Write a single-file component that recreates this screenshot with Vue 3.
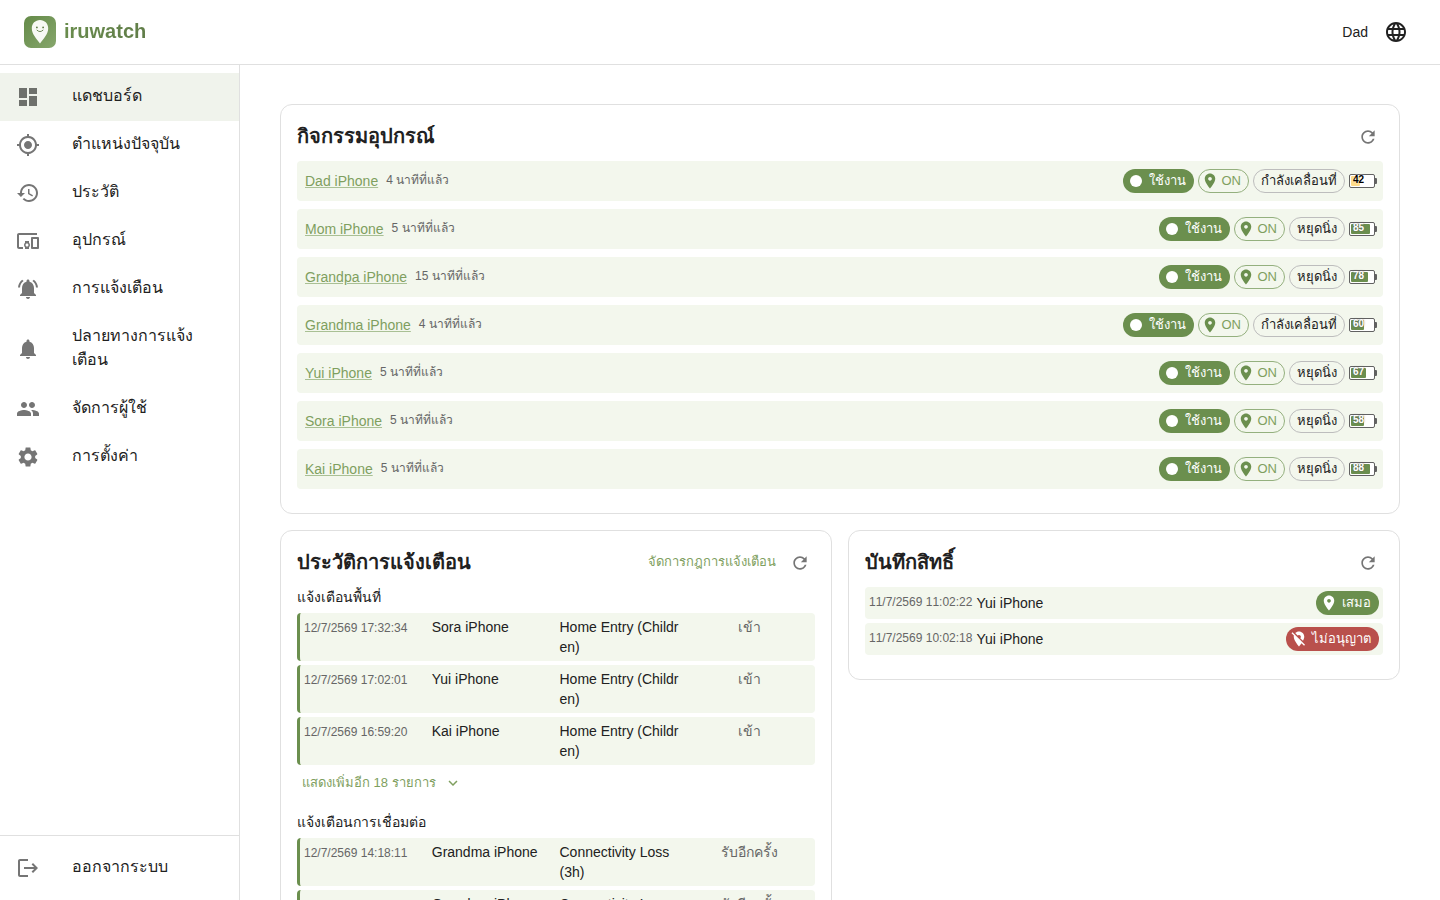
<template>
  <div class="app">
    <header class="topbar">
      <a href="#" class="brand">
        <svg class="brand__logo" viewBox="0 0 32 32" aria-hidden="true">
          <defs>
            <linearGradient id="logo-bg" x1="0" y1="0" x2="1" y2="1">
              <stop offset="0" stop-color="#648a48" />
              <stop offset="1" stop-color="#86a66c" />
            </linearGradient>
          </defs>
          <rect width="32" height="32" rx="7" fill="url(#logo-bg)" />
          <path d="M16 4c-4.7 0-8.200 3.600-8.200 8.200 0 6 4.800 10.400 8.200 15.400 3.400-5 8.200-9.400 8.200-15.400 0-4.600-3.500-8.200-8.200-8.200z" fill="#f7f9f4" />
          <circle cx="12.9" cy="11.4" r="0.9" fill="#5d7a45" />
          <circle cx="19.1" cy="11.4" r="0.9" fill="#5d7a45" />
          <path d="M13 14.200q3 3 6 0" fill="none" stroke="#5d7a45" stroke-width="0.9" stroke-linecap="round" />
        </svg>
        <span class="brand__name">iruwatch</span>
      </a>
      <div class="topbar__right">
        <span class="topbar__user">Dad</span>
        <button type="button" class="icon-btn icon-btn--large" aria-label="ภาษา">
          <svg class="icon" viewBox="0 0 24 24"><path :d="icons.language" /></svg>
        </button>
      </div>
    </header>

    <div class="layout">
      <nav class="sidebar">
        <ul class="nav-list">
          <li v-for="item in navItems" :key="item.label">
            <a
              href="#"
              class="nav-item"
              :class="{ 'nav-item--active': active === item.icon }"
              @click.prevent="active = item.icon"
            >
              <svg class="icon nav-item__icon" viewBox="0 0 24 24"><path :d="icons[item.icon]" /></svg>
              <span class="nav-item__text">{{ item.label }}</span>
            </a>
          </li>
        </ul>
        <div class="sidebar__bottom">
          <button type="button" class="nav-item">
            <svg class="icon nav-item__icon" viewBox="0 0 24 24"><path :d="icons.logout" /></svg>
            <span class="nav-item__text">ออกจากระบบ</span>
          </button>
        </div>
      </nav>

      <main class="content">
        <section class="card card--wide">
          <div class="card__header">
            <h2 class="card__title">กิจกรรมอุปกรณ์</h2>
            <button type="button" class="icon-btn" aria-label="รีเฟรช">
              <svg class="icon icon--small" viewBox="0 0 24 24"><path :d="icons.refresh" /></svg>
            </button>
          </div>
          <ul class="device-list">
            <li v-for="d in devices" :key="d.name" class="device-row">
              <a href="#" class="device-row__name">{{ d.name }}</a>
              <span class="muted muted--raised">{{ d.time }}</span>
              <div class="device-row__chips">
                <span class="chip chip--filled">
                  <svg class="chip__icon" viewBox="0 0 24 24"><circle cx="12" cy="12" r="8" /></svg>
                  ใช้งาน
                </span>
                <span class="chip chip--outlined">
                  <svg class="chip__icon" viewBox="0 0 24 24"><path :d="icons.pin" /></svg>
                  ON
                </span>
                <span class="chip chip--plain">{{ d.moving ? 'กำลังเคลื่อนที่' : 'หยุดนิ่ง' }}</span>
                <span class="battery" :class="{ 'battery--low': d.battery < 50 }">
                  <span class="battery__level" :style="{ width: d.battery + '%' }" />
                  <span class="battery__value">{{ d.battery }}</span>
                </span>
              </div>
            </li>
          </ul>
        </section>

        <section class="card">
          <div class="card__header">
            <h2 class="card__title">ประวัติการแจ้งเตือน</h2>
            <a href="#" class="text-btn">จัดการกฎการแจ้งเตือน</a>
            <button type="button" class="icon-btn" aria-label="รีเฟรช">
              <svg class="icon icon--small" viewBox="0 0 24 24"><path :d="icons.refresh" /></svg>
            </button>
          </div>
          <template v-for="group in alertGroups" :key="group.title">
            <h3 class="group-title">{{ group.title }}</h3>
            <table class="alerts">
              <tbody>
                <tr v-for="row in group.rows" :key="row.time" class="alert-row">
                  <td class="muted alert-row__time">{{ row.time }}</td>
                  <td>{{ row.device }}</td>
                  <td>{{ row.rule }}</td>
                  <td class="alert-row__event">{{ row.event }}</td>
                </tr>
              </tbody>
            </table>
            <button v-if="group.more" type="button" class="text-btn text-btn--more">
              แสดงเพิ่มอีก {{ group.more }} รายการ
              <svg class="icon icon--tiny" viewBox="0 0 24 24"><path :d="icons.expand" /></svg>
            </button>
          </template>
        </section>

        <section class="card">
          <div class="card__header">
            <h2 class="card__title">บันทึกสิทธิ์</h2>
            <button type="button" class="icon-btn" aria-label="รีเฟรช">
              <svg class="icon icon--small" viewBox="0 0 24 24"><path :d="icons.refresh" /></svg>
            </button>
          </div>
          <ul class="permission-list">
            <li v-for="p in permissions" :key="p.time" class="permission-row">
              <span class="muted muted--raised">{{ p.time }}</span>
              <span class="permission-row__name">{{ p.device }}</span>
              <span class="chip" :class="p.allowed ? 'chip--filled' : 'chip--error'">
                <svg class="chip__icon" viewBox="0 0 24 24"><path :d="p.allowed ? icons.pin : icons.pinOff" /></svg>
                {{ p.allowed ? 'เสมอ' : 'ไม่อนุญาต' }}
              </span>
            </li>
          </ul>
        </section>
      </main>
    </div>
  </div>
</template>

<script setup>
import { ref } from 'vue'

const active = ref('dashboard')

const icons = {
  dashboard: 'M3 13h8V3H3v10zm0 8h8v-6H3v6zm10 0h8V11h-8v10zm0-18v6h8V3h-8z',
  location: 'M12 8c-2.21 0-4 1.79-4 4s1.79 4 4 4 4-1.79 4-4-1.79-4-4-4zm8.94 3c-.46-4.17-3.77-7.48-7.94-7.94V1h-2v2.06C6.83 3.52 3.52 6.83 3.06 11H1v2h2.06c.46 4.17 3.77 7.48 7.94 7.94V23h2v-2.06c4.17-.46 7.48-3.77 7.94-7.94H23v-2h-2.06zM12 19c-3.87 0-7-3.13-7-7s3.13-7 7-7 7 3.13 7 7-3.13 7-7 7z',
  history: 'M13 3c-4.97 0-9 4.03-9 9H1l3.89 3.89.07.14L9 12H6c0-3.87 3.13-7 7-7s7 3.13 7 7-3.13 7-7 7c-1.93 0-3.68-.79-4.94-2.06l-1.42 1.42C8.27 19.99 10.51 21 13 21c4.97 0 9-4.03 9-9s-4.03-9-9-9zm-1 5v5l4.28 2.54.72-1.21-3.5-2.08V8H12z',
  devices: 'M3 6h18V4H3c-1.1 0-2 .9-2 2v12c0 1.1.9 2 2 2h4v-2H3V6zm10 6H9v1.78c-.61.55-1 1.33-1 2.22s.39 1.67 1 2.22V20h4v-1.78c.61-.55 1-1.34 1-2.22s-.39-1.67-1-2.22V12zm-2 5.5c-.83 0-1.5-.67-1.5-1.5s.67-1.5 1.5-1.5 1.5.67 1.5 1.5-.67 1.5-1.5 1.5zM22 8h-6c-.5 0-1 .5-1 1v10c0 .5.5 1 1 1h6c.5 0 1-.5 1-1V9c0-.5-.5-1-1-1zm-1 10h-4v-8h4v8z',
  bellActive: 'M7.58 4.08L6.15 2.65C3.75 4.48 2.17 7.3 2.03 10.5h2c.15-2.65 1.51-4.97 3.55-6.42zm12.39 6.42h2c-.15-3.2-1.73-6.02-4.12-7.85l-1.42 1.43c2.02 1.45 3.39 3.77 3.54 6.42zM18 11c0-3.07-1.64-5.64-4.5-6.32V4c0-.83-.67-1.5-1.5-1.5s-1.5.67-1.5 1.5v.68C7.63 5.36 6 7.92 6 11v5l-2 2v1h16v-1l-2-2v-5zm-6 11c.14 0 .27-.01.4-.04.65-.14 1.18-.58 1.44-1.18.1-.24.15-.5.15-.78h-4c.01 1.1.9 2 2.01 2z',
  bell: 'M12 22c1.1 0 2-.9 2-2h-4c0 1.1.89 2 2 2zm6-6v-5c0-3.07-1.64-5.64-4.5-6.32V4c0-.83-.67-1.5-1.5-1.5s-1.5.67-1.5 1.5v.68C7.63 5.36 6 7.92 6 11v5l-2 2v1h16v-1l-2-2z',
  people: 'M16 11c1.66 0 2.99-1.34 2.99-3S17.66 5 16 5c-1.66 0-3 1.34-3 3s1.34 3 3 3zm-8 0c1.66 0 2.99-1.34 2.99-3S9.66 5 8 5C6.34 5 5 6.34 5 8s1.34 3 3 3zm0 2c-2.33 0-7 1.17-7 3.5V19h14v-2.5c0-2.33-4.67-3.5-7-3.5zm8 0c-.29 0-.62.02-.97.05 1.16.84 1.97 1.97 1.97 3.45V19h6v-2.5c0-2.33-4.67-3.5-7-3.5z',
  settings: 'M19.14 12.94c.04-.3.06-.61.06-.94 0-.32-.02-.64-.07-.94l2.03-1.58c.18-.14.23-.41.12-.61l-1.92-3.32c-.12-.22-.37-.29-.59-.22l-2.39.96c-.5-.38-1.03-.7-1.62-.94l-.36-2.54c-.04-.24-.24-.41-.48-.41h-3.84c-.24 0-.43.17-.47.41l-.36 2.54c-.59.24-1.13.57-1.62.94l-2.39-.96c-.22-.08-.47 0-.59.22L2.74 8.87c-.12.21-.08.47.12.61l2.03 1.58c-.05.3-.09.63-.09.94s.02.64.07.94l-2.03 1.58c-.18.14-.23.41-.12.61l1.92 3.32c.12.22.37.29.59.22l2.39-.96c.5.38 1.03.7 1.62.94l.36 2.54c.05.24.24.41.48.41h3.84c.24 0 .44-.17.47-.41l.36-2.54c.59-.24 1.13-.56 1.62-.94l2.39.96c.22.08.47 0 .59-.22l1.92-3.32c.12-.22.07-.47-.12-.61l-2.01-1.58zM12 15.6c-1.98 0-3.6-1.62-3.6-3.6s1.62-3.6 3.6-3.6 3.6 1.62 3.6 3.6-1.62 3.6-3.6 3.6z',
  logout: 'm17 7-1.41 1.41L18.17 11H8v2h10.17l-2.58 2.58L17 17l5-5zM4 5h8V3H4c-1.1 0-2 .9-2 2v14c0 1.1.9 2 2 2h8v-2H4V5z',
  language: 'M11.99 2C6.47 2 2 6.48 2 12s4.47 10 9.99 10C17.52 22 22 17.52 22 12S17.52 2 11.99 2zm6.93 6h-2.95c-.32-1.25-.78-2.45-1.38-3.56 1.84.63 3.37 1.91 4.33 3.56zM12 4.04c.83 1.2 1.48 2.53 1.91 3.96h-3.82c.43-1.43 1.08-2.76 1.91-3.96zM4.26 14C4.1 13.36 4 12.69 4 12s.1-1.36.26-2h3.38c-.08.66-.14 1.32-.14 2s.06 1.34.14 2H4.26zm.82 2h2.95c.32 1.25.78 2.45 1.38 3.56-1.84-.63-3.37-1.9-4.33-3.56zm2.95-8H5.08c.96-1.66 2.49-2.93 4.33-3.56C8.81 5.55 8.35 6.75 8.03 8zM12 19.96c-.83-1.2-1.48-2.53-1.91-3.96h3.82c-.43 1.43-1.08 2.76-1.91 3.96zM14.34 14H9.66c-.09-.66-.16-1.32-.16-2s.07-1.35.16-2h4.68c.09.65.16 1.32.16 2s-.07 1.34-.16 2zm.25 5.56c.6-1.11 1.06-2.31 1.38-3.56h2.95c-.96 1.65-2.49 2.93-4.33 3.56zM16.36 14c.08-.66.14-1.32.14-2s-.06-1.34-.14-2h3.38c.16.64.26 1.31.26 2s-.1 1.36-.26 2h-3.38z',
  refresh: 'M17.65 6.35C16.2 4.9 14.21 4 12 4c-4.42 0-7.99 3.58-7.99 8s3.57 8 7.99 8c3.73 0 6.84-2.55 7.73-6h-2.08c-.82 2.33-3.04 4-5.65 4-3.31 0-6-2.69-6-6s2.69-6 6-6c1.66 0 3.14.69 4.22 1.78L13 11h7V4l-2.35 2.35z',
  pin: 'M12 2C8.13 2 5 5.13 5 9c0 5.25 7 13 7 13s7-7.75 7-13c0-3.87-3.13-7-7-7zm0 9.5c-1.38 0-2.5-1.12-2.5-2.5s1.12-2.5 2.5-2.5 2.5 1.12 2.5 2.5-1.12 2.5-2.5 2.5z',
  pinOff: 'M12 6.5c1.38 0 2.5 1.12 2.5 2.5 0 .74-.33 1.39-.83 1.85l3.63 3.63c.98-1.86 1.7-3.8 1.7-5.48 0-3.87-3.13-7-7-7-1.98 0-3.76.83-5.04 2.15l3.19 3.19c.46-.52 1.11-.84 1.85-.84zm4.37 9.6l-4.63-4.63-.11-.11L3.27 3 2 4.27l3.18 3.18C5.07 7.95 5 8.47 5 9c0 5.25 7 13 7 13s1.67-1.85 3.38-4.35L18.73 21 20 19.73l-3.63-3.63z',
  expand: 'M16.59 8.59L12 13.17 7.41 8.59 6 10l6 6 6-6z',
}

const navItems = [
  { icon: 'dashboard', label: 'แดชบอร์ด' },
  { icon: 'location', label: 'ตำแหน่งปัจจุบัน' },
  { icon: 'history', label: 'ประวัติ' },
  { icon: 'devices', label: 'อุปกรณ์' },
  { icon: 'bellActive', label: 'การแจ้งเตือน' },
  { icon: 'bell', label: 'ปลายทางการแจ้งเตือน' },
  { icon: 'people', label: 'จัดการผู้ใช้' },
  { icon: 'settings', label: 'การตั้งค่า' },
]

const devices = [
  { name: 'Dad iPhone', time: '4 นาทีที่แล้ว', moving: true, battery: 42 },
  { name: 'Mom iPhone', time: '5 นาทีที่แล้ว', moving: false, battery: 85 },
  { name: 'Grandpa iPhone', time: '15 นาทีที่แล้ว', moving: false, battery: 78 },
  { name: 'Grandma iPhone', time: '4 นาทีที่แล้ว', moving: true, battery: 60 },
  { name: 'Yui iPhone', time: '5 นาทีที่แล้ว', moving: false, battery: 67 },
  { name: 'Sora iPhone', time: '5 นาทีที่แล้ว', moving: false, battery: 58 },
  { name: 'Kai iPhone', time: '5 นาทีที่แล้ว', moving: false, battery: 88 },
]

const alertGroups = [
  {
    title: 'แจ้งเตือนพื้นที่',
    more: 18,
    rows: [
      { time: '12/7/2569 17:32:34', device: 'Sora iPhone', rule: 'Home Entry (Children)', event: 'เข้า' },
      { time: '12/7/2569 17:02:01', device: 'Yui iPhone', rule: 'Home Entry (Children)', event: 'เข้า' },
      { time: '12/7/2569 16:59:20', device: 'Kai iPhone', rule: 'Home Entry (Children)', event: 'เข้า' },
    ],
  },
  {
    title: 'แจ้งเตือนการเชื่อมต่อ',
    rows: [
      { time: '12/7/2569 14:18:11', device: 'Grandma iPhone', rule: 'Connectivity Loss (3h)', event: 'รับอีกครั้ง' },
      { time: '12/7/2569 11:18:11', device: 'Grandma iPhone', rule: 'Connectivity Loss (3h)', event: 'รับอีกครั้ง' },
    ],
  },
]

const permissions = [
  { time: '11/7/2569 11:02:22', device: 'Yui iPhone', allowed: true },
  { time: '11/7/2569 10:02:18', device: 'Yui iPhone', allowed: false },
]
</script>

<style>
body {
  margin: 0;
  background: #ffffff;
}
</style>

<style scoped>
.app {
  height: 100vh;
  display: flex;
  flex-direction: column;
  font-family: "Liberation Sans", sans-serif;
  font-size: 14px;
  line-height: 20px;
  color: #212121;
}

.app *,
.app {
  box-sizing: border-box;
}

ul {
  list-style: none;
  margin: 0;
  padding: 0;
}

button {
  font-family: inherit;
  background: none;
  border: none;
  cursor: pointer;
}

/* top bar */
.topbar {
  display: flex;
  align-items: center;
  justify-content: space-between;
  flex-shrink: 0;
  height: 65px;
  padding: 0 24px;
  border-bottom: 1px solid #e0e0e0;
}

.brand {
  display: flex;
  align-items: center;
  gap: 8px;
  text-decoration: none;
}

.brand__logo {
  width: 32px;
  height: 32px;
}

.brand__name {
  padding-bottom: 2px;
  font-size: 20px;
  font-weight: 700;
  line-height: 30px;
  color: transparent;
  background: linear-gradient(135deg, #6b8f4e, #5f7a48);
  background-clip: text;
}

.topbar__right {
  display: flex;
  align-items: center;
  gap: 8px;
}

.icon {
  display: block;
  width: 24px;
  height: 24px;
  flex-shrink: 0;
  fill: currentColor;
}

.icon--small {
  width: 20px;
  height: 20px;
}

.icon--tiny {
  width: 18px;
  height: 18px;
}

.icon-btn {
  padding: 5px;
  color: #757575;
}

.icon-btn--large {
  padding: 8px;
  color: #212121;
}

/* sidebar */
.layout {
  display: flex;
  flex: 1;
  min-height: 0;
}

.sidebar {
  display: flex;
  flex-direction: column;
  justify-content: space-between;
  flex-shrink: 0;
  width: 240px;
  border-right: 1px solid #e0e0e0;
}

.nav-list {
  padding: 8px 0;
}

.nav-item {
  display: flex;
  align-items: center;
  width: 100%;
  padding: 11px 16px;
  color: #212121;
  text-align: left;
  text-decoration: none;
}

.nav-item--active {
  background: #f0f3ec;
}

.nav-item__icon {
  margin-right: 32px;
  color: #757575;
}

.nav-item--active .nav-item__icon {
  color: #6e706c;
}

.nav-item__text {
  padding-bottom: 2px;
  font-size: 16px;
  line-height: 24px;
}

.sidebar__bottom {
  padding: 8px 0;
  border-top: 1px solid #e0e0e0;
}

/* cards */
.content {
  flex: 1;
  min-width: 0;
  display: grid;
  grid-template-columns: repeat(2, minmax(0, 1fr));
  align-items: start;
  align-content: start;
  gap: 16px;
  padding: 39px 40px 40px;
  overflow-y: auto;
  scrollbar-width: none;
}

.card {
  padding: 16px 16px 24px;
  border: 1px solid #e0e0e0;
  border-radius: 12px;
}

.card--wide {
  grid-column: 1 / -1;
}

.card__header {
  display: flex;
  align-items: center;
  gap: 4px;
  height: 32px;
  margin-bottom: 8px;
}

.card__title {
  flex: 1;
  margin: 0;
  padding-bottom: 2px;
  font-size: 20px;
  font-weight: 700;
  line-height: 30px;
}

.muted {
  font-size: 12px;
  font-kerning: none;
  color: #666666;
}

.muted--raised {
  padding-bottom: 2px;
}

.text-btn {
  padding: 4px 5px 6px;
  font-size: 13px;
  line-height: 20px;
  color: #7f9f5f;
  text-decoration: none;
}

.text-btn--more {
  display: flex;
  align-items: center;
  gap: 8px;
  margin: 4px 0 13px;
}

/* devices */
.device-list {
  display: flex;
  flex-direction: column;
  gap: 8px;
}

.device-row {
  display: flex;
  align-items: center;
  gap: 8px;
  padding: 8px;
  background: #f3f7ed;
  border-radius: 4px;
}

.device-row__name {
  color: #7f9f5f;
  text-decoration-color: #a9c094;
  text-underline-offset: 1px;
}

.device-row__chips {
  display: flex;
  align-items: center;
  gap: 4px;
  margin-left: auto;
}

.chip {
  display: inline-flex;
  align-items: center;
  height: 24px;
  padding: 0 8px 0 4px;
  border-radius: 12px;
  font-size: 13px;
  line-height: 20px;
  white-space: nowrap;
}

.chip__icon {
  width: 18px;
  height: 18px;
  margin-right: 4px;
  fill: currentColor;
}

.chip--filled {
  background: #6b8f4e;
  color: #ffffff;
}

.chip--error {
  background: #b9504c;
  color: #ffffff;
}

.chip--outlined {
  padding: 0 7px 0 2px;
  border: 1px solid #94b07e;
  color: #7f9f5f;
}

.chip--outlined .chip__icon {
  margin-right: 3px;
  color: #6b8f4e;
}

.chip--plain {
  padding: 0 7px;
  border: 1px solid #bdbdbd;
}

.battery {
  position: relative;
  display: flex;
  width: 26px;
  height: 14px;
  padding: 1px;
  border: 1px solid #616161;
  border-radius: 2px;
  background: #ffffff;
}

.battery::after {
  content: "";
  position: absolute;
  top: 3px;
  right: -3px;
  width: 2px;
  height: 6px;
  background: #616161;
  border-radius: 0 1px 1px 0;
}

.battery__level {
  background: #6b8f4e;
  border-radius: 1px;
}

.battery__value {
  position: absolute;
  top: 0;
  left: 3px;
  font-size: 10px;
  font-weight: 700;
  line-height: 10px;
  color: #ffffff;
  text-shadow: 0 0 2px #616161;
}

.battery--low .battery__level {
  background: #ffdc88;
}

.battery--low .battery__value {
  color: #000000;
  text-shadow: 0 0 2px #ffffff;
}

/* alerts */
.group-title {
  margin: 0 0 6px;
  font-size: 14px;
  font-weight: 400;
  line-height: 20px;
}

.alerts,
.alerts tbody {
  display: flex;
  flex-direction: column;
  gap: 4px;
}

.alert-row {
  display: grid;
  grid-template-columns: repeat(4, minmax(0, 1fr));
  gap: 4px;
  padding: 4px;
  background: #f3f7ed;
  border-left: 3px solid #6b8f4e;
  border-radius: 4px;
}

.alert-row td {
  padding: 0;
  word-break: break-all;
}

.alert-row .alert-row__time {
  padding-top: 1px;
}

.alert-row__event {
  color: #666666;
  text-align: center;
}

/* permissions */
.permission-list {
  display: flex;
  flex-direction: column;
  gap: 4px;
}

.permission-row {
  display: flex;
  align-items: center;
  gap: 4px;
  padding: 4px;
  background: #f3f7ed;
  border-radius: 4px;
}

.permission-row__name {
  flex: 1;
}
</style>
